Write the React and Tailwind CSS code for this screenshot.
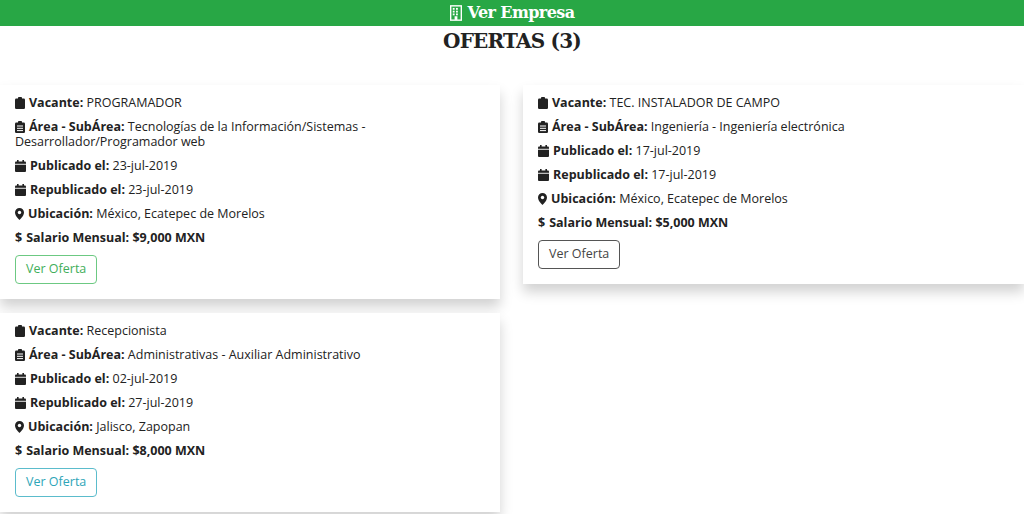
import React from "react";

const Clip = () => (<svg width="10" height="12" viewBox="0 0 10 12" className="inline-block mr-1 -mt-0.5"><rect x="0" y="1.5" width="10" height="10.5" rx="1.2" fill="#222"/><rect x="3" y="0" width="4" height="3" rx="0.8" fill="#222"/></svg>);
const ClipList = () => (<svg width="10" height="12" viewBox="0 0 10 12" className="inline-block mr-1 -mt-0.5"><rect x="0" y="1.5" width="10" height="10.5" rx="1.2" fill="#222"/><rect x="3" y="0" width="4" height="3" rx="0.8" fill="#222"/><rect x="2" y="4.5" width="6" height="1" fill="#fff"/><rect x="2" y="6.8" width="6" height="1" fill="#fff"/><rect x="2" y="9.1" width="6" height="1" fill="#fff"/></svg>);
const Cal = () => (<svg width="11" height="12" viewBox="0 0 11 12" className="inline-block mr-1 -mt-0.5"><rect x="0" y="1.5" width="11" height="10.5" rx="1" fill="#222"/><rect x="2" y="0" width="1.6" height="3" fill="#222"/><rect x="7.4" y="0" width="1.6" height="3" fill="#222"/><rect x="0" y="3.8" width="11" height="0.9" fill="#fff"/></svg>);
const Pin = () => (<svg width="9" height="12" viewBox="0 0 9 12" className="inline-block mr-1 -mt-0.5"><path d="M4.5 0A4.5 4.5 0 0 0 0 4.5C0 8 4.5 12 4.5 12S9 8 9 4.5A4.5 4.5 0 0 0 4.5 0z" fill="#222"/><circle cx="4.5" cy="4.5" r="1.7" fill="#fff"/></svg>);

const Row = ({ icon, label, value, bold }) => (
  <div className="leading-[15px] mb-[9px]">
    {icon}<b>{label}</b> {bold ? <b>{value}</b> : value}
  </div>
);

const Card = ({ d, btn }) => (
  <div className="bg-white shadow-[0_8px_12px_rgba(0,0,0,0.18)] px-[15px] pt-[10px] pb-[15px]">
    <Row icon={<Clip />} label="Vacante:" value={d.v} />
    <Row icon={<ClipList />} label="Área - SubÁrea:" value={d.a} />
    <Row icon={<Cal />} label="Publicado el:" value={d.p} />
    <Row icon={<Cal />} label="Republicado el:" value={d.r} />
    <Row icon={<Pin />} label="Ubicación:" value={d.u} />
    <Row icon={<span className="font-bold mr-1">$</span>} label="Salario Mensual:" value={d.s} bold />
    <button className={`mt-[1px] px-[10px] h-[29px] rounded border text-[12.5px] ${btn}`}>Ver Oferta</button>
  </div>
);

export default function App() {
  return (
    <div className="w-[1024px] h-[514px] overflow-hidden bg-white text-[12.5px] text-[#222]" style={{ fontFamily: '"Open Sans", sans-serif' }}>
      <div className="h-[26px] bg-[#28a745] flex items-center justify-center text-white text-[16px] font-bold" style={{ fontFamily: '"DejaVu Serif", serif', letterSpacing: '-0.6px' }}>
        <svg width="12" height="16" viewBox="0 0 13 17" className="mr-1.5"><rect x="0.75" y="0.75" width="11.5" height="15.5" fill="none" stroke="#fff" strokeWidth="1.5"/>{[3,6.5].map(x=>[3,6,9].map(y=><rect key={x+"-"+y} x={x} y={y} width="2" height="2" fill="#fff"/>))}<rect x="5" y="12" width="3" height="4" fill="#fff"/></svg>
        Ver Empresa
      </div>
      <div className="text-center text-[20px] font-bold leading-[30px] text-[#222]" style={{ fontFamily: '"DejaVu Serif", serif', letterSpacing: '-0.8px' }}>OFERTAS (3)</div>
      <div className="flex gap-[23px] mt-[29px]">
        <div className="w-[500px] flex flex-col gap-[14px]">
          <Card btn="border-[#6cc982] text-[#3fae5a]" d={{ v: "PROGRAMADOR", a: "Tecnologías de la Información/Sistemas - Desarrollador/Programador web", p: "23-jul-2019", r: "23-jul-2019", u: "México, Ecatepec de Morelos", s: "$9,000 MXN" }} />
          <Card btn="border-[#5bbccc] text-[#2ea5b8]" d={{ v: "Recepcionista", a: "Administrativas - Auxiliar Administrativo", p: "02-jul-2019", r: "27-jul-2019", u: "Jalisco, Zapopan", s: "$8,000 MXN" }} />
        </div>
        <div className="w-[501px]">
          <Card btn="border-[#555] text-[#444]" d={{ v: "TEC. INSTALADOR DE CAMPO", a: "Ingeniería - Ingeniería electrónica", p: "17-jul-2019", r: "17-jul-2019", u: "México, Ecatepec de Morelos", s: "$5,000 MXN" }} />
        </div>
      </div>
    </div>
  );
}
